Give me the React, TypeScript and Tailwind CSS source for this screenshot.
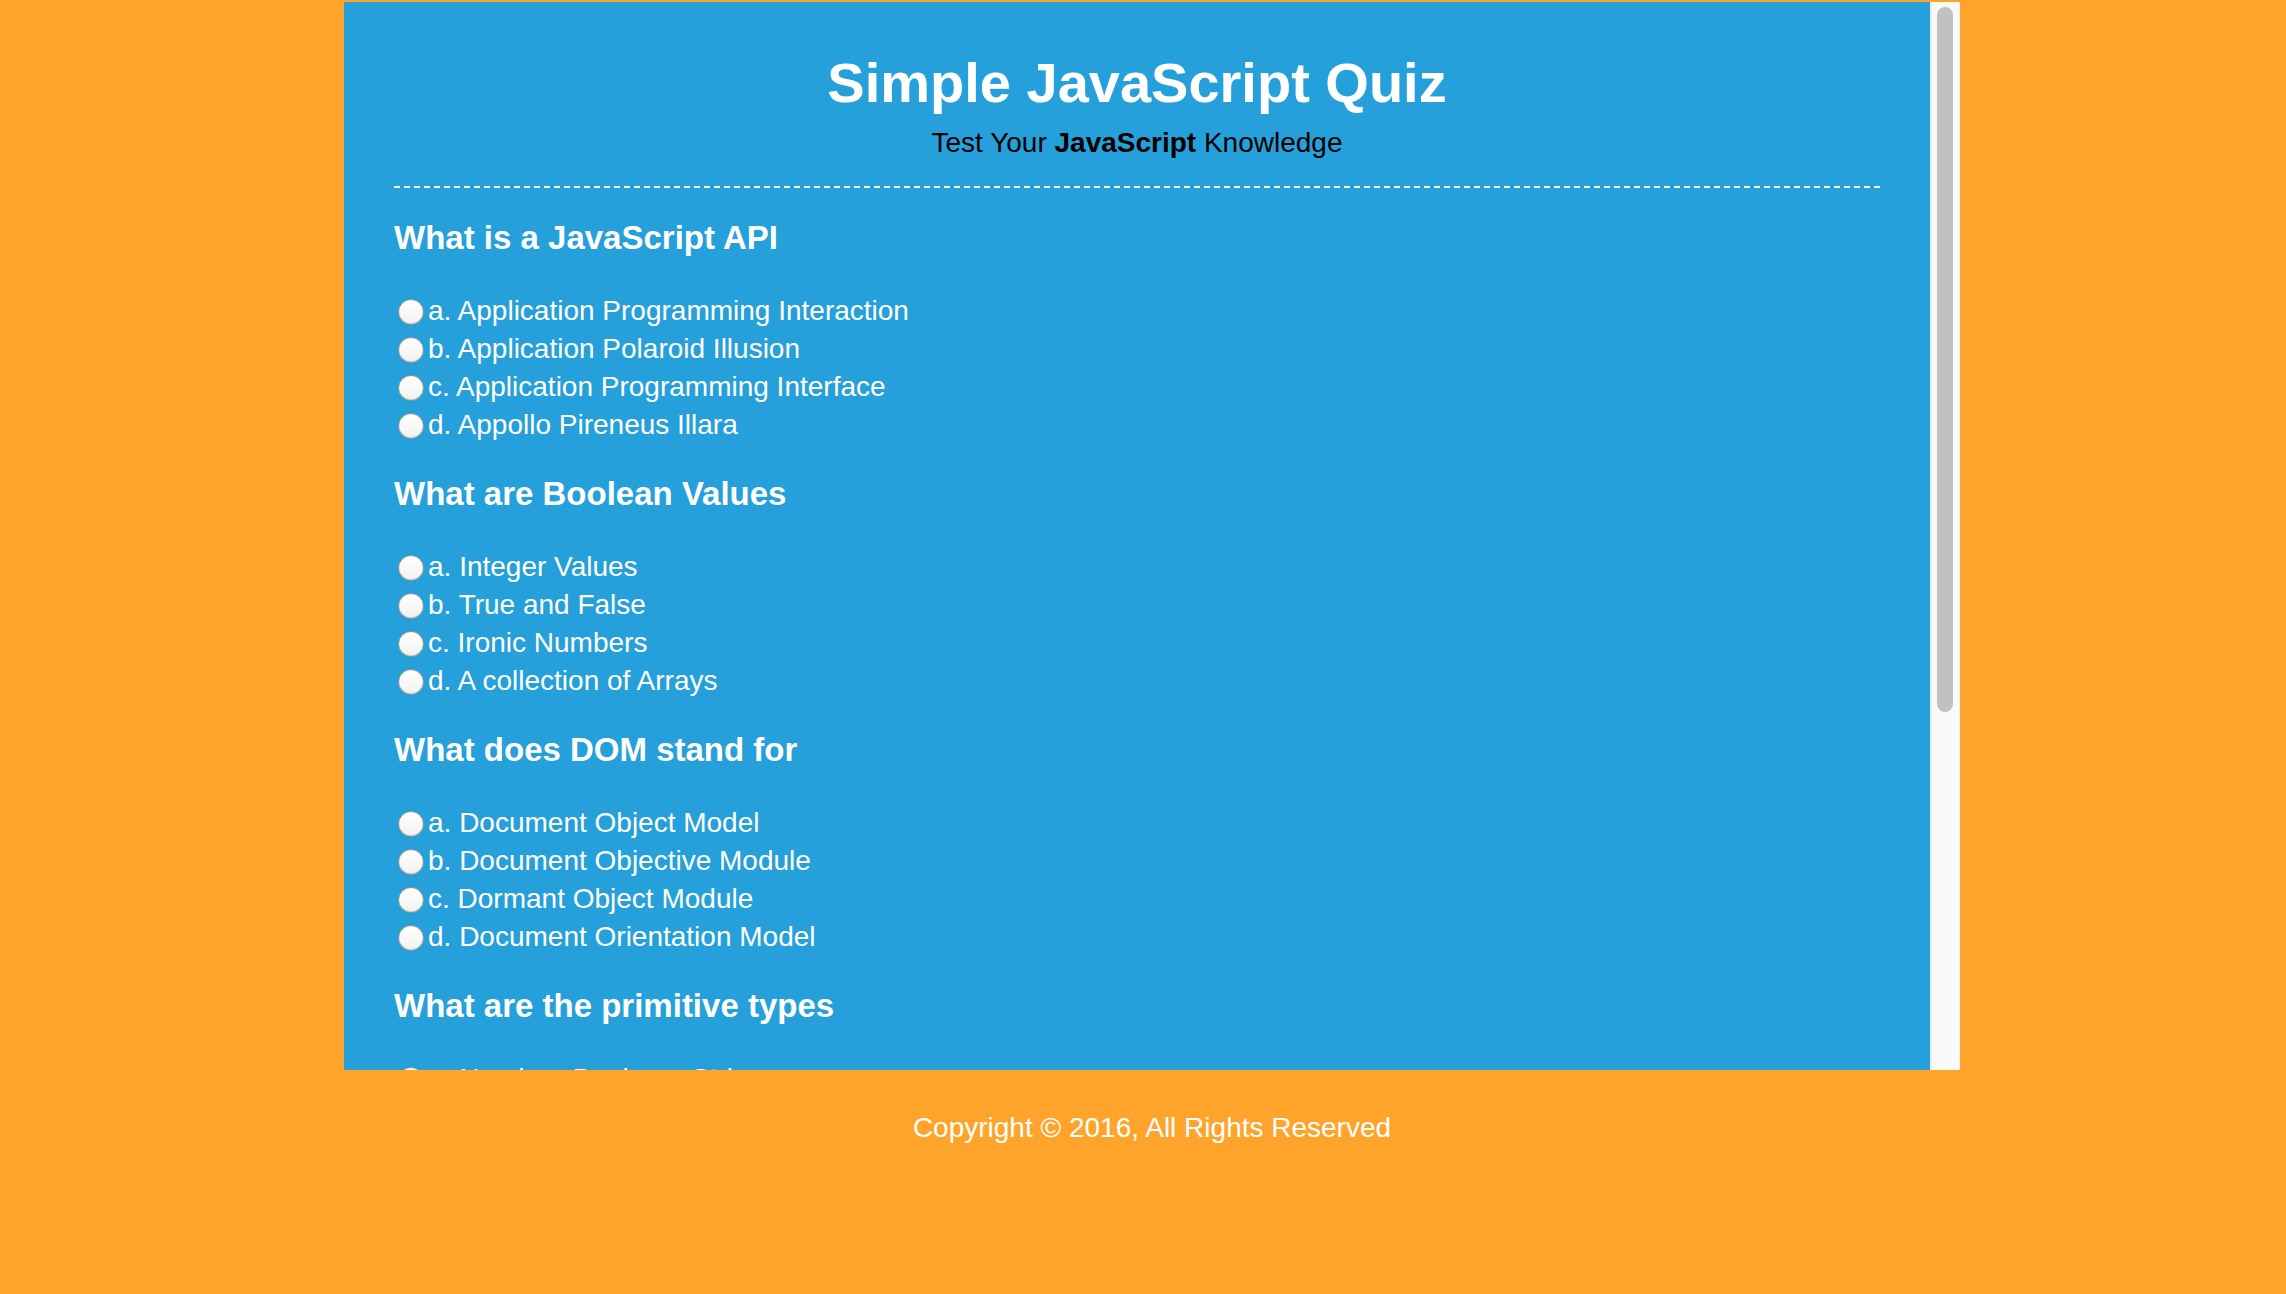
const questions = [
  {
    title: 'What is a JavaScript API',
    options: [
      'a. Application Programming Interaction',
      'b. Application Polaroid Illusion',
      'c. Application Programming Interface',
      'd. Appollo Pireneus Illara',
    ],
  },
  {
    title: 'What are Boolean Values',
    options: [
      'a. Integer Values',
      'b. True and False',
      'c. Ironic Numbers',
      'd. A collection of Arrays',
    ],
  },
  {
    title: 'What does DOM stand for',
    options: [
      'a. Document Object Model',
      'b. Document Objective Module',
      'c. Dormant Object Module',
      'd. Document Orientation Model',
    ],
  },
  {
    title: 'What are the primitive types',
    options: [
      'a. Number, Boolean, String',
      'b. Object, Array, Function',
      'c. Window, Document, Element',
      'd. Loop, Switch, Case',
    ],
  },
];

function Radio() {
  return (
    <span className="mt-[7px] ml-[4px] block h-[26px] w-[26px] shrink-0 rounded-full border border-[#9a9590] bg-gradient-to-b from-white to-[#f2f2f2] shadow-[inset_0_-1px_1px_rgba(0,0,0,0.12)]" />
  );
}

function Question({ q, first }: { q: (typeof questions)[number]; first: boolean }) {
  return (
    <div className={first ? 'mt-[34px]' : 'mt-[34px]'}>
      <h3 className="text-[33px] leading-[32px] font-bold text-white">{q.title}</h3>
      <ul className="mt-[38px]">
        {q.options.map((o) => (
          <li key={o} className="flex h-[38px] gap-[4px] text-[28px] leading-[38px] text-white">
            <Radio />
            <span>{o}</span>
          </li>
        ))}
      </ul>
    </div>
  );
}

export default function App() {
  return (
    <div className="min-h-screen bg-[#ffa42a] pt-[2px] font-['Liberation_Sans',Arial,sans-serif]">
      <div className="ml-[344px] w-[1616px]">
        {/* scroll box */}
        <div className="flex h-[1068px] overflow-hidden">
          <div className="flex-1 bg-[#26a0da] px-[50px] pt-[53px]">
            <h1 className="text-center text-[56px] leading-none font-bold text-white">
              Simple JavaScript Quiz
            </h1>
            <p className="mt-[18px] text-center text-[28px] leading-none text-black">
              Test Your <b>JavaScript</b> Knowledge
            </p>
            <div className="mt-[29px] border-t-2 border-dashed border-white" />
            {questions.map((q, i) => (
              <Question key={q.title} q={q} first={i === 0} />
            ))}
          </div>

          {/* fake scrollbar */}
          <div className="w-[30px] shrink-0 border-l-2 border-r border-l-[#ebebeb] border-r-[#efefef] bg-[#fafafa] pt-[5px] pl-[5px]">
            <div className="h-[705px] w-[16px] rounded-full bg-[#c1c1c1]" />
          </div>
        </div>

        <footer className="mt-[44px] text-center text-[28px] leading-none text-white">
          Copyright © 2016, All Rights Reserved
        </footer>
      </div>
    </div>
  );
}
